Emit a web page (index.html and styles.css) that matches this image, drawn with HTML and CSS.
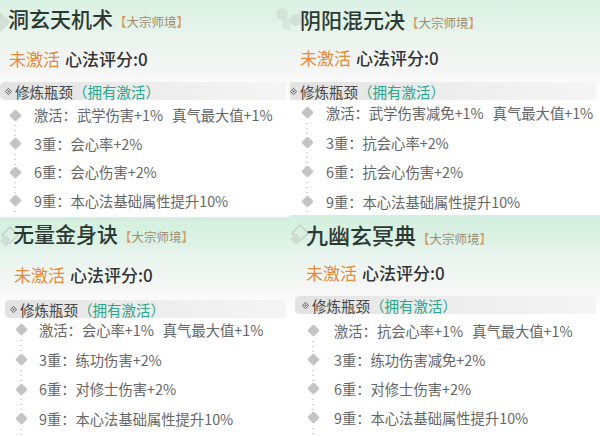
FILE: index.html
```html
<!DOCTYPE html>
<html lang="zh">
<head>
<meta charset="utf-8">
<link rel="stylesheet" href="styles.css">
</head>
<body>
<div class="grid">
  <section class="card c1">
    <svg class="orn orn-l" viewBox="0 0 20 40"><path d="M0 8 L10 18 L0 28 Z" fill="#c9d8cf" opacity=".7"/><circle cx="4" cy="18" r="5" fill="#d3e0d8" opacity=".8"/></svg>
    <svg class="orn orn-r" viewBox="0 0 20 40"><circle cx="12" cy="12" r="6" fill="#cfded5" opacity=".8"/><circle cx="18" cy="22" r="6" fill="#d6e3db" opacity=".8"/></svg>
    <div class="head"><h2 class="title">洞玄天机术</h2><span class="tag"><b>【</b>大宗师境<b>】</b></span></div>
    <div class="status"><span class="off">未激活</span>心法评分:0</div>
    <div class="band"><svg class="bul" viewBox="0 0 10 10"><path d="M5 0.5 L9.5 5 L5 9.5 L0.5 5 Z" fill="none" stroke="#555" stroke-width="1.3"/><circle cx="5" cy="5" r="1.3" fill="#555"/></svg>修炼瓶颈<span class="own">（拥有激活）</span></div>
    <ul class="items">
      <li>激活：武学伤害+1%<span class="sp">真气最大值+1%</span></li>
      <li>3重：会心率+2%</li>
      <li>6重：会心伤害+2%</li>
      <li>9重：本心法基础属性提升10%</li>
    </ul>
  </section>
  <section class="card c2">
    <svg class="orn orn-l" viewBox="0 0 20 40"><circle cx="6" cy="16" r="6" fill="#cddcd3" opacity=".8"/><circle cx="12" cy="10" r="4" fill="#d6e3db" opacity=".8"/></svg>
    <div class="head"><h2 class="title">阴阳混元决</h2><span class="tag"><b>【</b>大宗师境<b>】</b></span></div>
    <div class="status"><span class="off">未激活</span>心法评分:0</div>
    <div class="band"><svg class="bul" viewBox="0 0 10 10"><path d="M5 0.5 L9.5 5 L5 9.5 L0.5 5 Z" fill="none" stroke="#555" stroke-width="1.3"/><circle cx="5" cy="5" r="1.3" fill="#555"/></svg>修炼瓶颈<span class="own">（拥有激活）</span></div>
    <ul class="items">
      <li>激活：武学伤害减免+1%<span class="sp">真气最大值+1%</span></li>
      <li>3重：抗会心率+2%</li>
      <li>6重：抗会心伤害+2%</li>
      <li>9重：本心法基础属性提升10%</li>
    </ul>
  </section>
  <section class="card c3">
    <svg class="orn orn-l" viewBox="0 0 20 40"><path d="M2 14 L10 6 L18 14 L10 22 Z" fill="none" stroke="#c3d1c8" stroke-width="1.5"/><path d="M0 20 L6 14 L12 20 L6 26 Z" fill="#d0ddd5"/></svg>
    <div class="head"><h2 class="title">无量金身诀</h2><span class="tag"><b>【</b>大宗师境<b>】</b></span></div>
    <div class="status"><span class="off">未激活</span>心法评分:0</div>
    <div class="band"><svg class="bul" viewBox="0 0 10 10"><path d="M5 0.5 L9.5 5 L5 9.5 L0.5 5 Z" fill="none" stroke="#555" stroke-width="1.3"/><circle cx="5" cy="5" r="1.3" fill="#555"/></svg>修炼瓶颈<span class="own">（拥有激活）</span></div>
    <ul class="items">
      <li>激活：会心率+1%<span class="sp">真气最大值+1%</span></li>
      <li>3重：练功伤害+2%</li>
      <li>6重：对修士伤害+2%</li>
      <li>9重：本心法基础属性提升10%</li>
    </ul>
  </section>
  <section class="card c4">
    <svg class="orn orn-l" viewBox="0 0 20 40"><path d="M2 14 L10 6 L18 14 L10 22 Z" fill="none" stroke="#c3d1c8" stroke-width="1.5"/><path d="M0 20 L6 14 L12 20 L6 26 Z" fill="#d0ddd5"/></svg>
    <div class="head"><h2 class="title">九幽玄冥典</h2><span class="tag"><b>【</b>大宗师境<b>】</b></span></div>
    <div class="status"><span class="off">未激活</span>心法评分:0</div>
    <div class="band"><svg class="bul" viewBox="0 0 10 10"><path d="M5 0.5 L9.5 5 L5 9.5 L0.5 5 Z" fill="none" stroke="#555" stroke-width="1.3"/><circle cx="5" cy="5" r="1.3" fill="#555"/></svg>修炼瓶颈<span class="own">（拥有激活）</span></div>
    <ul class="items">
      <li>激活：抗会心率+1%<span class="sp">真气最大值+1%</span></li>
      <li>3重：练功伤害减免+2%</li>
      <li>6重：对修士伤害+2%</li>
      <li>9重：本心法基础属性提升10%</li>
    </ul>
  </section>
</div>
</body>
</html>
```

FILE: styles.css
```css
* { box-sizing: border-box; }
html, body { margin: 0; padding: 0; }
body {
  width: 600px;
  height: 436px;
  overflow: hidden;
  background: #fff;
  font-family: "Noto Sans CJK SC", "Noto Sans", sans-serif;
}
.grid {
  display: grid;
  grid-template-columns: 290px 310px;
  grid-template-rows: 216px 220px;
}
.card {
  position: relative;
  overflow: hidden;
  background: linear-gradient(180deg, #dbf1e4 0px, #e2f3e9 24px, #ebf4ef 38px, #f2f5f3 60px, #f6f7f6 76px, #fbfbfb 82px, #ffffff 104px);
  --hp: 4px; --sm: 14px; --bm: 10px; --im: 1px; --lh: 28.5px;
  --tx: 8px; --sx: 9px; --bx: 0px; --bux: 5px; --dx: 15px; --ix: 34px;
  --ts: 21px;
}
.c3, .c4 {
  background: linear-gradient(180deg, #d3efde 0px, #dbf2e5 24px, #e8f4ee 38px, #f1f6f3 60px, #f6f7f6 74px, #fbfbfb 82px, #ffffff 102px);
}
.c2 { --hp: 5px; --sm: 13px; --bm: 11px; --im: -2px; --lh: 29.5px;
  --tx: 10px; --sx: 10px; --bx: -2px; --bux: 2px; --dx: 17px; --ix: 36px; }
.c3 { --hp: 2px; --sm: 13px; --bm: 12px; --im: -3px; --lh: 29.7px;
  --tx: 13px; --sx: 14px; --bx: 5px; --bux: 5px; --dx: 21px; --ix: 39px; margin-top: 1px; }
.c4 { --hp: 5px; --sm: 13px; --bm: 10px; --im: 2px; --lh: 29px;
  --tx: 16px; --sx: 16px; --bx: 5px; --bux: 7px; --dx: 23px; --ix: 44px; --ts: 22px; margin-top: -1px; }

.orn { position: absolute; width: 20px; height: 40px; }
.orn-l { left: 0; top: 4px; }
.orn-r { right: 0; top: 2px; }

.head {
  display: flex;
  align-items: baseline;
  padding: var(--hp) 0 0 var(--tx);
  height: 32px;
  position: relative;
}
.title {
  margin: 0;
  font-size: var(--ts);
  line-height: 28px;
  font-weight: 500;
  color: #2c3933;
}
.tag {
  margin-left: 1px;
  font-size: 12.5px;
  color: #a08c6c;
}
.tag b { font-weight: 400; color: #d79a5e; }

.status {
  margin-top: var(--sm);
  padding-left: var(--sx);
  font-size: 17px;
  line-height: 26px;
  height: 26px;
  font-weight: 500;
  color: #333;
}
.off { color: #e38a3c; margin-right: 5px; font-weight: 400; }

.band {
  margin: var(--bm) 4px 0 var(--bx);
  height: 18px;
  display: flex;
  align-items: center;
  padding-left: var(--bux);
  font-size: 14.5px;
  color: #474747;
  border-radius: 5px 0 0 5px;
  background: linear-gradient(90deg, #e2e2e2 0%, #ececec 45%, #f5f5f5 100%);
}
.bul { width: 7px; height: 7px; margin-right: 3px; flex: none; }
.own { color: #2aa78c; }

.items {
  list-style: none;
  margin: var(--im) 0 0 0;
  padding: 0;
}
.items li {
  position: relative;
  line-height: var(--lh);
  height: var(--lh);
  padding-left: var(--ix);
  font-size: 14.3px;
  color: #666;
  white-space: nowrap;
}
.items li::before {
  content: "";
  position: absolute;
  left: calc(var(--dx) - 4.5px);
  top: calc(50% - 4.5px);
  width: 9px;
  height: 9px;
  background: #c4c4c4;
  border-radius: 1.5px;
  transform: rotate(45deg);
}
.items li::after {
  content: "";
  position: absolute;
  left: calc(var(--dx) - 1px);
  top: calc(50% + 8px);
  width: 2px;
  height: calc(var(--lh) - 14px);
  background: radial-gradient(circle, #cfcfcf 0.9px, transparent 1px) 0 0 / 2px 5px repeat-y;
}
.sp { margin-left: 9px; }
```
